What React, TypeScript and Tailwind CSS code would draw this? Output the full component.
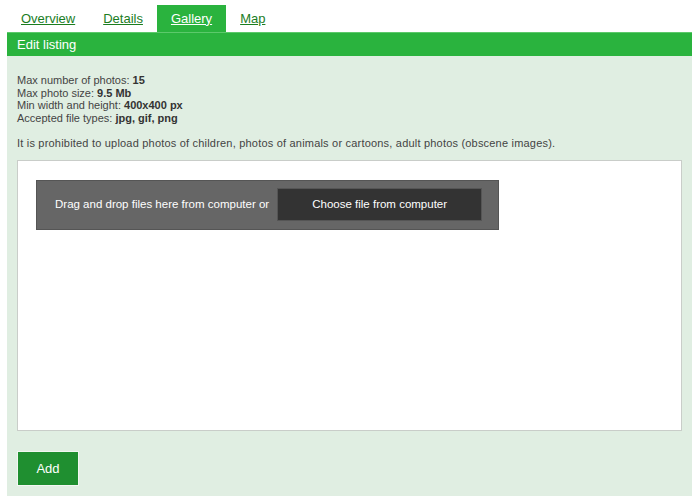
import { useState } from 'react';

const TABS = ['Overview', 'Details', 'Gallery', 'Map'];

export default function App() {
  const [tab, setTab] = useState('Gallery');

  return (
    <div className="w-[700px] h-[496px] overflow-hidden bg-white font-['Liberation_Sans',Arial,sans-serif]">
      <div className="flex pt-[5px] pl-[7px]">
        {TABS.map((t) => (
          <button
            key={t}
            onClick={() => setTab(t)}
            className={`h-[27px] px-[14px] text-[13px] underline ${
              t === tab ? 'bg-[#2ab33e] text-white' : 'text-[#1b7d1f]'
            }`}
          >
            {t}
          </button>
        ))}
      </div>

      <div className="mx-[7px] w-[685px] bg-[#e0eee2]">
        <div className="h-[24px] bg-[#2ab33e] border-t border-[#5cc96b] pl-[10px] flex items-center text-[13px] text-white">
          Edit listing
        </div>

        <div className="px-[10px] pt-[18px] pb-[12px] text-[11px] text-[#444]">
          <div className="leading-[12.7px]">
            <p>Max number of photos: <b className="text-[#333]">15</b></p>
            <p>Max photo size: <b className="text-[#333]">9.5 Mb</b></p>
            <p>Min width and height: <b className="text-[#333]">400x400 px</b></p>
            <p>Accepted file types: <b className="text-[#333]">jpg, gif, png</b></p>
          </div>
          <p className="mt-[12px] leading-[13px] tracking-[0.2px]">
            It is prohibited to upload photos of children, photos of animals or cartoons, adult photos (obscene images).
          </p>

          <div className="mt-[10px] h-[271px] bg-white border border-[#c9cdc9] pt-[19px] pl-[18px]">
            <div className="w-[463px] h-[50px] bg-[#666] border border-[#555] flex items-center pl-[18px] gap-[8px]">
              <span className="text-[11.5px] text-white">Drag and drop files here from computer or</span>
              <button className="w-[205px] h-[33px] bg-[#333] border border-[#555] text-[11.5px] text-white">
                Choose file from computer
              </button>
            </div>
          </div>

          <button className="mt-[20px] w-[62px] h-[35px] bg-[#1f8f30] border border-[#f2f7f2] text-[13px] text-white">
            Add
          </button>
        </div>
      </div>
    </div>
  );
}
